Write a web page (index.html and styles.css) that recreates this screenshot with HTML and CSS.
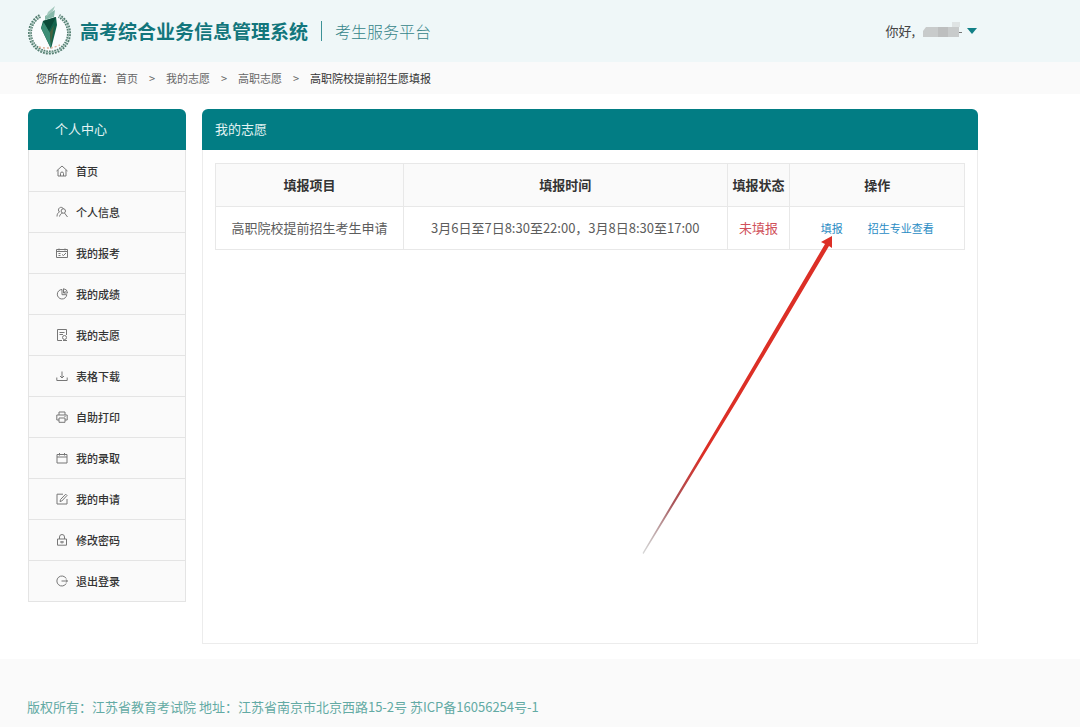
FILE: index.html
```html
<!DOCTYPE html>
<html lang="zh-CN">
<head>
<meta charset="utf-8">
<meta name="viewport" content="width=device-width, initial-scale=1">
<title>高考综合业务信息管理系统</title>
<link rel="stylesheet" href="styles.css">
</head>
<body>
<header class="header">
  <svg class="logo" viewBox="1 1 44 50" aria-hidden="true">
    <circle cx="22" cy="28" r="19" fill="#fff" opacity=".65"/>
    <path d="M13 11A19.500 19.500 0 1 0 32 11" fill="none" stroke="#557f72" stroke-width="4" stroke-dasharray="1.800 1"/>
    <path d="M13 11A19.500 19.500 0 1 0 32 11" fill="none" stroke="#a9c6bd" stroke-width="1"/>
    <path d="M18 11 28 5 27 12 18 15Z" fill="#86b8a9"/>
    <path d="M21 7 28 1 26 6 19 12Z" fill="#a4c9be"/>
    <path d="M16 16 29 12 30 20 24 44 14 23Z" fill="#13634c"/>
    <path d="M17 17 23 28 24 43 14 23Z" fill="#3c8e76"/>
    <path d="M16 16 29 12 22 26Z" fill="#0c4b39"/>
    <path d="M27 20 24 40 23 27Z" fill="#47623f"/>
    <path d="M12 42Q22 45 33 40" fill="none" stroke="#dfb49d" stroke-width="1.500" stroke-dasharray="2 2"/>
  </svg>
  <h1 class="title">高考综合业务信息管理系统</h1>
  <span class="subtitle">考生服务平台</span>
  <button class="user" type="button" aria-label="用户菜单">
    <span>你好,</span>
    <svg class="mask" viewBox="0 0 41 18" aria-hidden="true">
      <path d="M31 0h8v5h-8z" fill="#dfe4e4"/>
      <path d="M5 5h33v10H2V9z" fill="#c8cbcb"/>
      <path d="M17 5h10v10H17z" fill="#bdbfbf"/>
      <path d="M38 10.500h3" stroke="#777"/>
    </svg>
    <svg class="caret" viewBox="0 0 10 7" aria-hidden="true"><path d="M0 0h10L5 6z" fill="#118087"/></svg>
  </button>
</header>

<nav class="crumbs" aria-label="位置">
  <span class="crumbs-label">您所在的位置：</span>
  <a href="#">首页</a><span class="sep">&gt;</span>
  <a href="#">我的志愿</a><span class="sep">&gt;</span>
  <a href="#">高职志愿</a><span class="sep">&gt;</span>
  <span class="current">高职院校提前招生愿填报</span>
</nav>

<div class="content">
  <aside class="sidebar">
    <h2 class="bar bar-side">个人中心</h2>
    <nav class="menu" aria-label="个人中心">
      <a href="#"><svg class="icon" viewBox="0 0 12 12"><path d="M.5 6 6 1l5.500 5M2 5v6h8V5M4.500 11V8.500a1.500 1.500 0 0 1 3 0V11"/></svg>首页</a>
      <a href="#"><svg class="icon" viewBox="0 0 12 12"><path d="M1 10.500C1 8 2 6.500 3.500 6A2.600 2.600 0 1 1 7.500 3"/><circle cx="7.300" cy="5" r="2.200"/><path d="M3.500 10.500C4 8.500 5 7.500 6.500 7.200M8.500 7 11.500 11"/></svg>个人信息</a>
      <a href="#"><svg class="icon" viewBox="0 0 12 12"><path d="M.5 2.500h11v8H.5zM.5 4.500h11M3 1.500v2M9 1.500v2M2.500 6.500h2M2.500 8.500h2M6 7.500l1.500 1L10 6"/></svg>我的报考</a>
      <a href="#"><svg class="icon" viewBox="0 0 12 12"><path d="M6 1.500a4.750 4.750 0 1 0 4.800 5.200H6zM7.500.7A4.500 4.500 0 0 1 11.500 5h-4zM9.500 3 8 5"/></svg>我的成绩</a>
      <a href="#"><svg class="icon" viewBox="0 0 12 12"><path d="M10.500 6V.5h-9v11H6M3.500 3.500h5M3.500 5.500H7"/><circle cx="8.500" cy="8.500" r="2"/><path d="M7 11.500h4"/></svg>我的志愿</a>
      <a href="#"><svg class="icon" viewBox="0 0 12 12"><path d="M6 1.500V8M4 6l2 2 2-2M.8 7.500v3h10.400v-3"/></svg>表格下载</a>
      <a href="#"><svg class="icon" viewBox="0 0 12 12"><path d="M3 4V1h6v3M3 9H.8V4h10.400v5H9M3 7h6v4.300H3zM8.500 5.500h1"/></svg>自助打印</a>
      <a href="#"><svg class="icon" viewBox="0 0 12 12"><path d="M1 2.500h10v8.500H1zM1 5h10M3.500 1v2.500M8.500 1v2.500"/></svg>我的录取</a>
      <a href="#"><svg class="icon" viewBox="0 0 12 12"><path d="M7 1.200H1v9.800h10V6M4 8.500 4.500 6.500 9.700 1.200l1.300 1.300L5.800 8z"/></svg>我的申请</a>
      <a href="#"><svg class="icon" viewBox="0 0 12 12"><path d="M1.500 5h9v6.200h-9zM3.500 5V3a2.500 2.500 0 0 1 5 0v2M4 8h4M6 7v2.500"/></svg>修改密码</a>
      <a href="#"><svg class="icon" viewBox="0 0 12 12"><path d="M10.200 3.500a5 5 0 1 0 0 5M5.500 6H11.500M9.800 4.500 11.500 6 9.800 7.500"/></svg>退出登录</a>
    </nav>
  </aside>

  <main class="panel">
    <h2 class="bar">我的志愿</h2>
    <div class="panel-body">
      <table class="table">
        <colgroup><col class="c-item"><col class="c-time"><col class="c-state"><col class="c-ops"></colgroup>
        <thead>
          <tr><th>填报项目</th><th>填报时间</th><th>填报状态</th><th>操作</th></tr>
        </thead>
        <tbody>
          <tr>
            <td>高职院校提前招生考生申请</td>
            <td>3月6日至7日8:30至22:00，3月8日8:30至17:00</td>
            <td class="state">未填报</td>
            <td><div class="ops"><a href="#">填报</a><a href="#">招生专业查看</a></div></td>
          </tr>
        </tbody>
      </table>
    </div>
    <svg class="arrow" viewBox="0 0 200 324" aria-hidden="true">
      <defs>
        <linearGradient id="fade" gradientUnits="userSpaceOnUse" x1="3" y1="321" x2="62" y2="222">
          <stop offset="0" stop-color="#999" stop-opacity=".4"/>
          <stop offset=".5" stop-color="#a8555a"/>
          <stop offset="1" stop-color="#dc2f26"/>
        </linearGradient>
      </defs>
      <path d="M192 4 192 16 189 14 97 169 3.500 322 2.500 321 94 167 185 12 181 10Z" fill="url(#fade)"/>
    </svg>
  </main>
</div>

<footer class="footer">版权所有：江苏省教育考试院 地址：江苏省南京市北京西路15-2号 苏ICP备16056254号-1</footer>
</body>
</html>
```
FILE: styles.css
```css
* {
  box-sizing: border-box;
}

body {
  display: flex;
  flex-direction: column;
  min-height: 100vh;
  margin: 0;
  background: #fff;
  color: #5c5c5c;
  font-family: "Noto Sans CJK SC", sans-serif;
  font-size: 13px;
  line-height: 20px;
}

h1,
h2 {
  margin: 0;
}

a {
  color: inherit;
  text-decoration: none;
}

.header {
  display: flex;
  align-items: center;
  height: 62px;
  padding: 0 103px 0 28px;
  background: #eff7f8;
}

.logo {
  width: 44px;
  height: 50px;
  margin-right: 8px;
  overflow: visible;
}

.title {
  color: #12767c;
  font-size: 19px;
  font-weight: 700;
  white-space: nowrap;
}

.subtitle {
  margin-left: 13px;
  padding-left: 13px;
  border-left: 1px solid #3d9297;
  color: #358589;
  font-size: 16px;
  font-weight: 300;
  white-space: nowrap;
}

.user {
  display: flex;
  align-items: center;
  margin-left: auto;
  padding: 0;
  border: 0;
  background: none;
  color: #444;
  font: inherit;
}

.mask {
  width: 41px;
  height: 18px;
  margin: 0 5px 0 6px;
}

.caret {
  width: 10px;
  height: 7px;
}

.crumbs {
  display: flex;
  align-items: center;
  height: 32px;
  padding: 0 36px;
  background: #fafafa;
  color: #666;
  font-size: 11px;
}

.crumbs-label {
  margin-right: 3px;
  color: #444;
}

.sep {
  width: 28px;
  text-align: center;
}

.current {
  color: #333;
}

.content {
  display: flex;
  flex: 1;
  align-items: flex-start;
  gap: 16px;
  padding: 15px 102px 15px 28px;
}

.sidebar {
  flex: 0 0 158px;
}

.bar {
  padding: 10px 13px 11px;
  border-radius: 6px 6px 0 0;
  background: #027d84;
  color: #e3f3f3;
  font-size: 13px;
  font-weight: 400;
}

.bar-side {
  padding-left: 27px;
}

.menu {
  border: 1px solid #e4e4e4;
  border-top: 0;
  background: #fafafa;
}

.menu a {
  display: flex;
  align-items: center;
  gap: 8px;
  height: 41px;
  padding-left: 27px;
  color: #333;
  font-size: 11px;
  font-weight: 500;
}

.menu a + a {
  border-top: 1px solid #e4e4e4;
}

.icon {
  width: 12px;
  height: 12px;
  fill: none;
  stroke: #777;
  stroke-width: 1;
}

.panel {
  position: relative;
  display: flex;
  flex: 1;
  flex-direction: column;
  align-self: stretch;
  min-width: 0;
}

.panel-body {
  flex: 1;
  padding: 13px 12px;
  border: 1px solid #ececec;
  border-top: 0;
}

.table {
  width: 100%;
  border-collapse: collapse;
  table-layout: fixed;
}

.c-item {
  width: 25.1%;
}

.c-time {
  width: 43.2%;
}

.c-state {
  width: 8.4%;
}

.c-ops {
  width: 23.3%;
}

.table th,
.table td {
  height: 43px;
  padding: 0;
  border: 1px solid #e8e8e8;
  text-align: center;
  white-space: nowrap;
}

.table th {
  background: #fafafa;
  color: #333;
  font-weight: 700;
}

.table .state {
  color: #d0515b;
}

.ops {
  display: flex;
  justify-content: center;
  gap: 25px;
  color: #2a8cc4;
  font-size: 11px;
}

.arrow {
  position: absolute;
  top: 123px;
  right: 138px;
  width: 200px;
  height: 324px;
  pointer-events: none;
}

.footer {
  padding: 38px 27px 10px;
  background: #fafafa;
  color: #63aaa4;
}
```
